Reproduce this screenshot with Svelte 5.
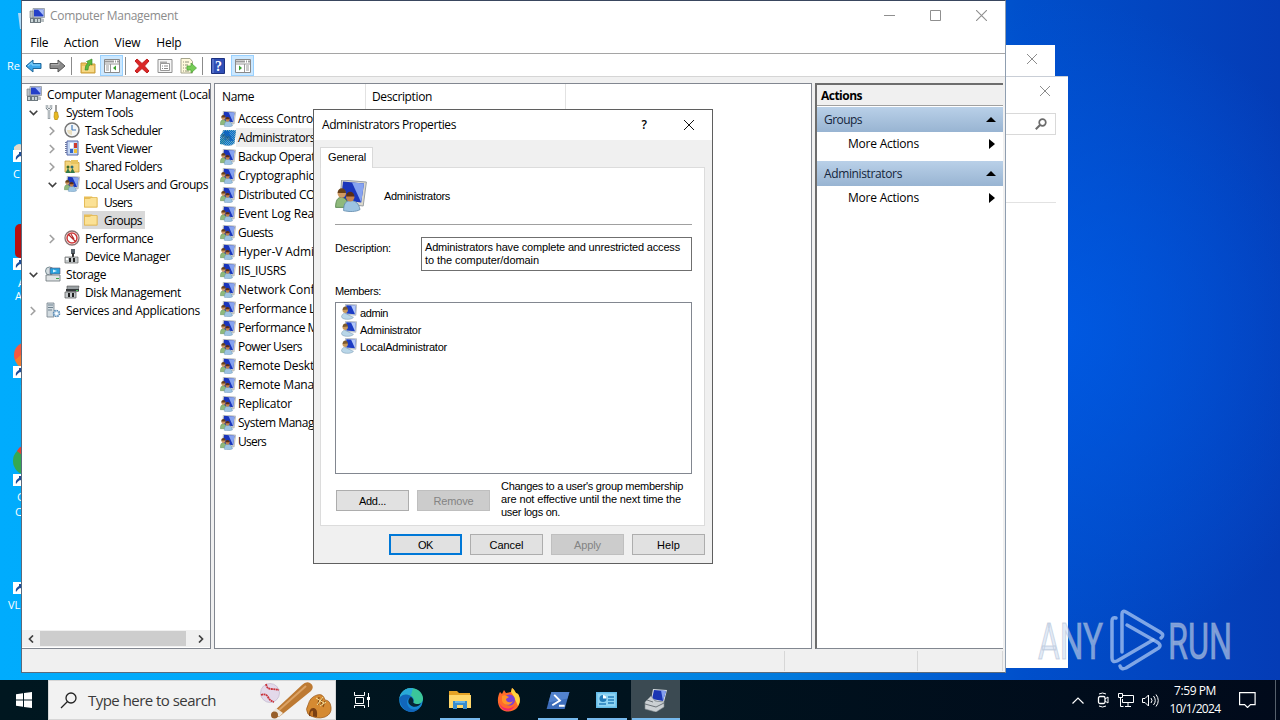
<script>
  const tree = [
    { l: 0, icon: 'computer', t: 'Computer Management (Local)', w: 167 },
    { l: 1, icon: 'tools', t: 'System Tools', w: 67, e: 'open' },
    { l: 2, icon: 'clock', t: 'Task Scheduler', w: 77, e: 'closed' },
    { l: 2, icon: 'event', t: 'Event Viewer', w: 67, e: 'closed' },
    { l: 2, icon: 'shared', t: 'Shared Folders', w: 77, e: 'closed' },
    { l: 2, icon: 'group', t: 'Local Users and Groups', w: 123, e: 'open' },
    { l: 3, icon: 'folder', t: 'Users', w: 28 },
    { l: 3, icon: 'folder', t: 'Groups', w: 38, sel: true },
    { l: 2, icon: 'perf', t: 'Performance', w: 68, e: 'closed' },
    { l: 2, icon: 'device', t: 'Device Manager', w: 85 },
    { l: 1, icon: 'storage', t: 'Storage', w: 40, e: 'open' },
    { l: 2, icon: 'disk', t: 'Disk Management', w: 96 },
    { l: 1, icon: 'services', t: 'Services and Applications', w: 134, e: 'closed' }
  ];
  // w is the width of the first n characters
  const groups = [
    { t: 'Access Control Assistance Operators', n: 13, w: 75 },
    { t: 'Administrators', n: 14, w: 77, sel: true },
    { t: 'Backup Operators', n: 13, w: 77 },
    { t: 'Cryptographic Operators', n: 13, w: 76 },
    { t: 'Distributed COM Users', n: 14, w: 77 },
    { t: 'Event Log Readers', n: 13, w: 76 },
    { t: 'Guests', n: 6, w: 35 },
    { t: 'Hyper-V Administrators', n: 12, w: 76 },
    { t: 'IIS_IUSRS', n: 9, w: 48 },
    { t: 'Network Configuration Operators', n: 12, w: 76 },
    { t: 'Performance Log Users', n: 13, w: 77 },
    { t: 'Performance Monitor Users', n: 11, w: 67 },
    { t: 'Power Users', n: 11, w: 64 },
    { t: 'Remote Desktop Users', n: 12, w: 76 },
    { t: 'Remote Management Users', n: 11, w: 76 },
    { t: 'Replicator', n: 10, w: 54 },
    { t: 'System Managed Accounts Group', n: 12, w: 76 },
    { t: 'Users', n: 5, w: 28 }
  ];
  const members = [
    { t: 'admin', w: 28 },
    { t: 'Administrator', w: 61 },
    { t: 'LocalAdministrator', w: 87 }
  ];
  const actions = [
    { t: 'Groups', w: 38 },
    { t: 'Administrators', w: 78 }
  ];

  function fit(el, arg) {
    const [w, n] = Array.isArray(arg) ? arg : [arg, el.textContent.length];
    const r = document.createRange();
    r.setStart(el.firstChild, 0);
    r.setEnd(el.firstChild, n);
    el.style.letterSpacing = ((w - r.getBoundingClientRect().width) / n).toFixed(3) + 'px';
  }
</script>

{#snippet closeX(c, s)}
  <svg width={s} height={s} viewBox="0 0 10 10"><path d="M0 0L10 10M10 0L0 10" stroke={c} stroke-width="1" fill="none" /></svg>
{/snippet}

{#snippet icon(k, s = 16)}
  <svg class="ic" width={s} height={s} viewBox="0 0 16 16">
    {#if k === 'computer'}
      <path d="M4 .5h11.500v9H4z" fill="#d8dce0" stroke="#8e979f" stroke-width=".8" /><path d="M5 1.500h9.500v7H5z" fill="#2440c8" /><path d="M9 1.500h5.500v6z" fill="#a9bdf6" />
      <path d="M1 3h3v7H1z" fill="#b8c0c6" stroke="#6f777d" stroke-width=".6" /><path d="M1 10h11v5H1z" fill="#6d7980" /><path d="M2 11h2v3H2zM6 11h2v3H6zM9 11h2v3H9z" fill="#c9d4d6" /><path d="M12 10l3 1v3h-3z" fill="#b9c0c3" />
    {:else if k === 'tools'}
      <path d="M2 1v3l2 2 2-2V1M4 6v9" stroke="#7c868c" stroke-width="2.400" fill="none" /><path d="M2 1v3l2 2 2-2V1M4 5v9.500" stroke="#eef2f4" stroke-width="1" fill="none" />
      <path d="M11 1v8" stroke="#777" stroke-width="1.400" /><path d="M9.500 8h3l1 5-1.500 3h-2L9 13z" fill="#e8b921" stroke="#a8820e" stroke-width=".6" />
    {:else if k === 'clock'}
      <circle cx="8" cy="8" r="7" fill="#f4f6f7" stroke="#757575" stroke-width="1.500" /><path d="M8 3v5h4" stroke="#447dbb" stroke-width="1.200" fill="none" /><path d="M8 8v5A5 5 0 0 1 3 8z" fill="#e9dfc2" />
    {:else if k === 'event'}
      <path d="M3 1h11v14H3z" fill="#c6d8f4" stroke="#5266a8" /><path d="M2 2v12" stroke="#6d78a2" stroke-width="2" stroke-dasharray="1 1" /><path d="M6 3h3v5H6z" fill="#fff" /><path d="M10 3h3v5h-3z" fill="#d0392b" /><path d="M6 9h3v4H6z" fill="#3467c8" /><path d="M10 9h3v4h-3z" fill="#efc136" />
    {:else if k === 'shared'}
      <path d="M1 3h5l1 1.500h8V14H1z" fill="#f3d47c" stroke="#c79a35" stroke-width=".8" /><path d="M7 2h7v4H7z" fill="#e8c45f" /><circle cx="4" cy="9" r="1.500" fill="#3f6b2a" /><circle cx="8" cy="9" r="1.500" fill="#2b6b78" /><path d="M1.500 15l2.500-5 2.500 5zM6 15l2.500-5 2.500 5z" fill="#347a4a" />
    {:else if k === 'group' || k === 'bigGroup'}
      <path d="M3.300 0l12.400 1-1.600 12L2.500 11.500z" fill="#dcd9cc" stroke="#9aa0a5" stroke-width=".5" /><path d="M4 .8l10.500.9-1.400 9.500L3 10z" fill="#1a35bb" /><path d="M8.500 1.200l6 .5-1.400 9.500z" fill="#86a3f0" />
      <path d="M.3 13.700c0-3.500 1-5 2.800-5s3.600 1.500 3.600 5z" fill="#8fb97c" stroke="#4e7d45" stroke-width=".4" /><circle cx="3.400" cy="6.800" r="2.100" fill="#d09a62" /><path d="M1.300 6.500c0-3.200 4.200-3.200 4.200 0z" fill="#674019" />
      <path d="M4.300 15.300c0-4 1.500-5 3.700-5s4 1.500 4.500 4.500c-2 1.200-5.500 1.200-8.200.5z" fill="#9dc4e2" stroke="#5c86aa" stroke-width=".4" /><circle cx="7.600" cy="8.600" r="2.100" fill="#c4834f" /><path d="M5.500 8.300c0-3.200 4.200-3.200 4.200 0z" fill="#5a2d15" />
    {:else if k === 'folder'}
      <path d="M1 2.500h8l1 1h4.500v10H1z" fill="#e9bd55" /><path d="M1.500 4.500h5l2-1H14v9.500H1.500z" fill="#fbe195" stroke="#dcae44" stroke-width=".6" />
    {:else if k === 'perf'}
      <circle cx="8" cy="8" r="7" fill="#fff" stroke="#8c7272" stroke-width="1.300" /><circle cx="8" cy="8" r="5" fill="none" stroke="#cf3939" stroke-width="1.500" /><path d="M4 4l8 8M7 4l3 5" stroke="#b62b2b" stroke-width="1.200" />
    {:else if k === 'device'}
      <path d="M7 1h4v5H7z" fill="#59636b" /><path d="M8 5h2v5H8z" fill="#333" /><path d="M1 9h13v6H1z" fill="#c4c9cb" stroke="#666" stroke-width=".7" /><path d="M5 10h2v4H5zM9 10h2v4H9z" fill="#222" /><path d="M2 10h2v2H2z" fill="#fff" />
    {:else if k === 'storage'}
      <circle cx="4.500" cy="5" r="4" fill="#d4dde0" stroke="#788b93" /><path d="M5 2h10v6H5z" fill="#29a0dc" stroke="#557" stroke-width=".6" /><path d="M8 3.500l4 1.500-4 1.500z" fill="#d8f3ff" /><path d="M1 9h14v6H1z" fill="#dfe3e4" stroke="#687277" stroke-width=".8" /><path d="M11 12h3v1h-3z" fill="#3ba34b" />
    {:else if k === 'disk'}
      <path d="M3 2h12l-1 5H3z" fill="#9aa0a3" stroke="#555" stroke-width=".6" /><path d="M2 5h13v2.500H2z" fill="#34383a" /><path d="M1 8h11v6H1z" fill="#c4c9cb" stroke="#555" stroke-width=".7" /><path d="M4 9h2v4H4zM8 9h2v4H8z" fill="#222" /><path d="M12 6h2v1h-2z" fill="#4c5" />
    {:else if k === 'services'}
      <path d="M2 1h7v14H2z" fill="#d2dbe0" stroke="#75818a" stroke-width=".8" /><path d="M3 3h5M3 5.500h5M3 8h4" stroke="#6f8290" /><circle cx="11.500" cy="11.500" r="3" fill="#cfe3f3" stroke="#5689b4" stroke-width="1.600" stroke-dasharray="1.500 .8" /><circle cx="11.500" cy="11.500" r="1.200" fill="#fff" />
    {:else if k === 'user'}
      <path d="M4.500.3l11.200.5-.8 10.500-10.400-.8z" fill="#cfd6dc" stroke="#939ba3" stroke-width=".5" /><path d="M5.300 1.200l9.400.5-.7 8.500-8.700-.6z" fill="#1c3cc4" /><path d="M10 1.500l4.700.2-.7 8.500z" fill="#b3c8f8" />
      <path d="M.5 12.500c1-3.500 3-3.500 5-2.500l7 3.300c-2 3-12 2.700-12-.8z" fill="#b9d6e8" stroke="#7193ad" stroke-width=".5" /><circle cx="4.200" cy="6.300" r="2.600" fill="#c99a5c" /><path d="M1.600 6c0-4.500 5.200-4.500 5.200-.5z" fill="#7d5a2c" />
    {/if}
  </svg>
{/snippet}

<div class="desk">
  <svg class="shortcuts" width="22" height="620" viewBox="0 0 22 620">
    <path d="M18 13h3v16h-1z" fill="#a9dafa" />
    <path d="M14 147q4-5 8-2v7h-8z" fill="#e2dacb" />
    <rect x="15" y="224" width="16" height="34" rx="5" fill="#b70f0f" />
    <circle cx="27" cy="355" r="13" fill="#f4593e" /><path d="M15 360q3 8 7 8v-14z" fill="#f69221" opacity=".6" />
    <circle cx="27" cy="461" r="14" fill="#35a852" /><path d="M17 451q2-4 5-5v9z" fill="#e64235" />
    {#each [151, 259, 367, 475, 583] as y}
      <g transform={`translate(13 ${y - 1})`}><path d="M0 0h11v12H0z" fill="#fff" /><path d="M3 10q-1-4 3-6V2h4v5L7 6q-2 1-4 4" fill="#1c4d99" /></g>
    {/each}
    <g fill="#fff" font-family="Open Sans" font-size="11"><text x="7" y="70">Re</text><text x="13" y="178">C</text><text x="18" y="287">A</text><text x="15" y="300">A</text><text x="20" y="393">F</text><text x="17" y="501">G</text><text x="15" y="516">C</text><text x="8" y="609">VL</text></g>
  </svg>

  <div class="back w1">{@render closeX('#8c8c8c', 10)}</div>
  <div class="back w2">
    <div class="bclose">{@render closeX('#8c8c8c', 10)}</div>
    <div class="find"><svg width="12" height="12" viewBox="0 0 12 12" fill="none" stroke="#6b6b6b"><circle cx="7.500" cy="4.500" r="3.300" stroke-width="1.700" /><path d="M5 7L.8 11.200" stroke-width="2" /></svg></div>
    <div class="sep"></div>
  </div>

  <main class="win">
    <header class="title">
      {@render icon('computer')}<span class="tt" use:fit={128}>Computer Management</span>
      <div class="ctl">
        <svg width="11" height="11" viewBox="0 0 11 11"><path d="M0 5.500h11" stroke="#8f8f8f" /></svg>
        <svg width="11" height="11" viewBox="0 0 11 11"><path d="M.5.5h10v10H.5z" stroke="#8f8f8f" fill="none" /></svg>
        {@render closeX('#8f8f8f', 11)}
      </div>
    </header>
    <nav class="menu"><span use:fit={18}>File</span><span use:fit={35}>Action</span><span use:fit={26}>View</span><span use:fit={25}>Help</span></nav>
    <div class="tools">
      <svg width="18" height="18" viewBox="0 0 18 18"><path d="M1 9l7-6v3.500h8v5H8V15z" fill="#3ba6ea" stroke="#1f6799" /><path d="M3 9l4-3.500V8h8" stroke="#90d8ff" fill="none" /></svg>
      <svg class="m5" width="18" height="18" viewBox="0 0 18 18"><path d="M17 9l-7-6v3.500H2v5h8V15z" fill="#8b8b8b" stroke="#575757" /><path d="M3 7.700h8V5" stroke="#b5b5b5" fill="none" /></svg>
      <i></i>
      <svg width="16" height="16" viewBox="0 0 16 16"><path d="M1 5h5l1 1h8v9H1z" fill="#ecc15b" stroke="#c99d3a" /><path d="M2 8h12v6H2z" fill="#f6d884" /><path d="M5 12q0-5 3-7L6.500 3.500 12 1v6L10.500 6Q8 8 8 12z" fill="#5cba3c" stroke="#2f8424" stroke-width=".6" /></svg>
      <span class="tog t1"><svg width="16" height="14" viewBox="0 0 16 14"><path d="M.5.5h15v13H.5z" fill="#fff" stroke="#8a8a8a" /><path d="M1 2.500h14" stroke="#9b9b9b" stroke-width="2" stroke-dasharray="9 1 1 1" /><path d="M1 5h14M6.500 5v8" stroke="#999" /><path d="M2 7h3M2 9h3M2 11h3" stroke="#999" /><path d="M12 6.500v5L9 9z" fill="#39a12d" /></svg></span>
      <i class="i2"></i>
      <svg class="m8" width="16" height="16" viewBox="0 0 16 16"><path d="M1 3l2-2 5 4.500L13 1l2 2-4.500 5 4.500 5-2 2-5-4.500L3 15l-2-2 4.500-5z" fill="#db2727" stroke="#c02020" stroke-width="1" /></svg>
      <svg class="m7" width="16" height="16" viewBox="0 0 16 16"><path d="M1 1.500h14v13H1z" fill="#f5f5f5" stroke="#909090" /><path d="M3 3.500h7v2H3z" fill="#aaa" /><path d="M3.500 5.500h9v7h-9z" fill="#fff" stroke="#999" /><path d="M5 8h6M5 10.500h6" stroke="#888" stroke-dasharray="1 1 6" /></svg>
      <svg class="m7" width="17" height="16" viewBox="0 0 17 16"><path d="M1 .5h9l2.500 3V15H1z" fill="#fff9dc" stroke="#a5a58d" /><path d="M3 4h6M3 7h5M3 10h4M3 13h6" stroke="#8e927b" stroke-dasharray="1 1 6" /><path d="M7 8h4V5l5.500 5-5.500 5v-3H7z" fill="#76cc55" stroke="#4ba335" stroke-width=".7" /></svg>
      <i></i>
      <svg width="14" height="16" viewBox="0 0 14 16"><path d="M.5.5h13v15H.5z" fill="#304fb6" stroke="#1c3180" /><path d="M2 1v14" stroke="#7f94da" /><text x="4" y="13" font-family="Liberation Serif" font-weight="700" font-size="14" fill="#fff">?</text></svg>
      <span class="tog t3"><svg width="16" height="14" viewBox="0 0 16 14"><path d="M.5.5h15v13H.5z" fill="#fff" stroke="#8a8a8a" /><path d="M1 2.500h14" stroke="#9b9b9b" stroke-width="2" stroke-dasharray="9 1 1 1" /><path d="M1 5h14M9.500 5v8" stroke="#999" /><path d="M11 7h3M11 9h3M11 11h3" stroke="#999" /><path d="M4 6.500v5L7 9z" fill="#39a12d" /></svg></span>
    </div>
    <div class="body">
      <section class="tree">
        <div class="rows">
          {#each tree as r}
            <div class="row l{r.l}">
              {#if r.l > 0}<span class="exp">
                {#if r.e === 'open'}<svg width="9" height="6" viewBox="0 0 9 6"><path d="M.7.7l3.800 3.800L8.300.7" fill="none" stroke="#404040" stroke-width="1.600" /></svg>
                {:else if r.e}<svg width="6" height="10" viewBox="0 0 6 10"><path d="M.8 1l4 4-4 4" fill="none" stroke="#a0a0a0" stroke-width="1.600" /></svg>{/if}
              </span>{/if}
              <span class="node" class:sel={r.sel}>{@render icon(r.icon)}<span class="lb" use:fit={r.w}>{r.t}</span></span>
            </div>
          {/each}
        </div>
        <div class="sb">
          <svg width="6" height="8" viewBox="0 0 6 8"><path d="M5 .5L1.500 4 5 7.500" fill="none" stroke="#404040" stroke-width="1.700" /></svg>
          <div class="thumb"></div>
          <svg width="6" height="8" viewBox="0 0 6 8"><path d="M1 .5L4.500 4 1 7.500" fill="none" stroke="#404040" stroke-width="1.700" /></svg>
        </div>
      </section>
      <section class="list">
        <div class="cols"><div><span use:fit={32}>Name</span></div><div><span use:fit={60}>Description</span></div></div>
        {#each groups as g}
          <div class="g" class:gsel={g.sel}><span class="gi">{@render icon('group')}</span><span use:fit={[g.w, g.n]}>{g.t}</span></div>
        {/each}
      </section>
      <aside>
        <div class="ah"><b use:fit={41}>Actions</b></div>
        {#each actions as a}
          <div class="ag"><span use:fit={a.w}>{a.t}</span><svg width="10" height="5" viewBox="0 0 10 5"><path d="M5 0l5 5H0z" /></svg></div>
          <div class="am"><span use:fit={71}>More Actions</span><svg width="6" height="10" viewBox="0 0 6 10"><path d="M0 0l6 5-6 5z" /></svg></div>
        {/each}
      </aside>
    </div>
    <footer><div></div><div></div><div></div></footer>
  </main>

  <div class="dlg">
    <div class="dt"><span use:fit={134}>Administrators Properties</span><span class="q">?</span>{@render closeX('#111', 10)}</div>
    <div class="tab"><span use:fit={38}>General</span></div>
    <div class="panel">
      <div class="who">{@render icon('bigGroup', 32)}<span use:fit={66}>Administrators</span></div>
      <div class="desc"><span class="dl"><span use:fit={56}>Description:</span></span><div class="box"><p><span use:fit={255}>Administrators have complete and unrestricted access</span></p><p><span use:fit={114}>to the computer/domain</span></p></div></div>
      <div class="ml"><span use:fit={46}>Members:</span></div>
      <div class="members">
        {#each members as m}<div>{@render icon('user')}<span use:fit={m.w}>{m.t}</span></div>{/each}
      </div>
      <div class="acts">
        <button><span use:fit={27}>Add...</span></button><button class="off"><span use:fit={40}>Remove</span></button>
        <div class="note"><p><span use:fit={182}>Changes to a user's group membership</span></p><p><span use:fit={180}>are not effective until the next time the</span></p><p><span use:fit={59}>user logs on.</span></p></div>
      </div>
    </div>
    <div class="btns"><button class="def"><span use:fit={15}>OK</span></button><button><span use:fit={34}>Cancel</span></button><button class="off"><span use:fit={27}>Apply</span></button><button><span use:fit={23}>Help</span></button></div>
  </div>

  <svg class="mark" width="200" height="70" viewBox="0 0 200 70">
    <g font-family="Roboto" font-size="50" fill="#cfdcf0" fill-opacity=".6" stroke="#a3b4cc" stroke-opacity=".5" stroke-width="1.200">
      <text x="3" y="51" textLength="65" lengthAdjust="spacingAndGlyphs">ANY</text><text x="133" y="51" textLength="64" lengthAdjust="spacingAndGlyphs">RUN</text>
    </g>
    <g fill="none" stroke="#a9c5f2" stroke-opacity=".75" stroke-width="3.500" stroke-linejoin="round" stroke-linecap="round"><path d="M81 10q-4-1-4 3v37q0 5 5 3l36-21" /><path d="M87 44V6q0-4 4-2l34 20q5 3 1 6" /><path d="M92 17l30 17q6 4 0 7L91 60q-5 2-6-2" /></g>
  </svg>

  <div class="bar">
    <div class="start"><svg width="16" height="16" viewBox="0 0 16 16" fill="#fff"><path d="M0 2.300L7 1.300v6.200H0zM8 1.100L16 0v7.500H8zM0 8.500h7v6.200l-7-1zM8 8.500h8V16l-8-1.100z" /></svg></div>
    <div class="search">
      <svg width="17" height="17" viewBox="0 0 17 17" fill="none" stroke="#222" stroke-width="1.300"><circle cx="11" cy="6" r="5" /><path d="M7.500 9.500L1 16" /></svg>
      <span use:fit={128}>Type here to search</span>
      <svg class="ball" width="74" height="37" viewBox="0 0 74 37">
        <circle cx="11" cy="11" r="9.500" fill="#e3d9ea" stroke="#b9b0ca" stroke-width=".6" /><path d="M7 2q1 5 5 5t8 1M2 13q5-2 7 2t6 5" fill="none" stroke="#c9333b" stroke-width="1.800" stroke-dasharray="2 .5" />
        <path d="M13 31L43 3q4-4 8-2 5 3 1 8L20 35q-5 0-7-4z" fill="#bd7a33" /><path d="M20 28L47 4" stroke="#dba365" stroke-width="2" /><path d="M17 26l7 5-4 4-6-6z" fill="#ede8df" /><circle cx="15.500" cy="33" r="3.500" fill="#98602b" />
        <path d="M49 32q-3-5 0-9 2-8 9-10 6-2 8 5 5 0 6 7 1 7-6 10-9 3-17-3z" fill="#d58a32" stroke="#9a5a1e" stroke-width=".7" /><path d="M50 34q0-9 5-8 4 1 3 9" fill="#7a3f12" /><path d="M51 33q1-5 3-4v6" fill="#c77826" /><path d="M60 15l-1 8m4-7l-1 8m4-5l-2 6" stroke="#8a4d14" stroke-width="1.200" fill="none" /><path d="M57 16l8 5m-1-6l-6 8m9-3l-6 4" stroke="#f5e3a0" />
      </svg>
    </div>
    <div class="app"><svg width="16" height="16" viewBox="0 0 16 16" fill="none" stroke="#fff"><path d="M.5 0v3.500h10V0M.5 16v-2.500h10V16M1.500 5.500h8v6h-8zM14.500 1v14" /><path d="M13 5h3v3h-3z" fill="#fff" stroke="none" /></svg></div>
    <div class="app"><svg width="24" height="24" viewBox="0 0 24 24"><circle cx="12" cy="12" r="11.800" fill="#1687d4" /><path d="M.5 10C2 2 9-.5 14 .2c7 1 11 7 9.800 12-1 4-7 5-9.500 2.800 1-2 1-5-2-7C8 5.500 3 6.500.5 10z" fill="#3bc69a" /><path d="M.5 10C2 2 9-.5 14 .2l-2 7C8 5.500 3 6.500.5 10z" fill="#29a9d8" /><path d="M1 9c4-4 10-3 12 1-4-1-6 3-4.500 7 2 5 8 5.500 12 3-5 6-13 5-17-1C1 15.500.5 12 1 9z" fill="#1166ba" /><path d="M12 9c2 1 3 3 2.200 5.500 2 2 6 2 8 .5-2 4-8 5-11 2-3-2-2-7 .8-8z" fill="#072536" /></svg></div>
    <div class="app run"><svg width="22" height="20" viewBox="0 0 22 20"><path d="M0 1h8l2 2h11v15H0z" fill="#e5a325" /><path d="M0 5h22v13H0z" fill="#ffd76a" /><path d="M4 19v-8h14v8h-4v-4H8v4z" fill="#388cce" /><path d="M6 11h10v2H6z" fill="#68b5e8" /></svg></div>
    <div class="app"><svg width="24" height="24" viewBox="0 0 24 24"><path d="M3 4l2 2 2-4 2 3 5-1 1-4c3 2 3 4 4 5l2 1c3 5 2 10-1 14-4 4-11 5-16 1C0 17 0 9 3 4z" fill="#ff6a2a" /><path d="M14 4l1-4c3 2 3 4 4 5l2 1c3 5 2 9 0 12l-5-11z" fill="#ffd23e" /><path d="M2 14c3 8 12 8 16 3-3 8-14 8-16-3z" fill="#f5296b" /><circle cx="12.500" cy="12" r="5.500" fill="#7a42d4" /><path d="M5 8c3-2 5 0 7 1l-3 2c0 4 5 4 7 2-2 5-9 5-11 0z" fill="#ff9427" /></svg></div>
    <div class="app run"><svg width="24" height="19" viewBox="0 0 24 20"><path d="M5 1h19l-5 18H0z" fill="#3c6cba" /><path d="M5 1h19l-2 7-20 4z" fill="#5b8cd6" opacity=".7" /><path d="M8 4l6 6-8 5M13 15.500h6" stroke="#fff" stroke-width="2" fill="none" /></svg></div>
    <div class="app run"><svg width="21" height="16" viewBox="0 0 21 16"><path d="M0 0h21v16H0z" fill="#64bce9" /><path d="M1.500 1.500h18v13h-18z" fill="#8fd4f3" /><circle cx="7" cy="6.500" r="3.500" fill="#237bb8" /><path d="M7 3v3.500h3.500A3.500 3.500 0 0 0 7 3z" fill="#fff" /><path d="M12 5h6M12 8h6M12 11h6M3 12h7" stroke="#247dbc" stroke-width="1.400" /></svg></div>
    <div class="app run act"><svg width="24" height="24" viewBox="0 0 24 24"><path d="M9 1l14 1-3 12-13-2z" fill="#d7dce1" /><path d="M10 2l12 1-3 10-11-2z" fill="#1b36b4" /><path d="M17 2.500l5 .5-3 10z" fill="#849eed" /><path d="M1 14l6-6 4 5 9 1v5l-8 5-11-3z" fill="#cbd0d3" stroke="#82898e" stroke-width=".6" /><path d="M1 16l11 3 8-4M3 12l6 2" stroke="#6d7479" fill="none" /></svg></div>
    <div class="tray">
      <svg width="12" height="7" viewBox="0 0 12 7"><path d="M.5 6.500L6 1l5.500 5.500" fill="none" stroke="#fff" stroke-width="1.200" /></svg>
      <svg class="c" width="12" height="16" viewBox="0 0 12 16" fill="none" stroke="#fff"><rect x="1.500" y="4.500" width="6.500" height="7" rx="1.500" stroke-width="1.300" /><path d="M8 7l3-2v6l-3-2M2 2q3.500-2 7 0M2 14q3.500 2 7 0" /></svg>
      <svg class="n" width="16" height="14" viewBox="0 0 16 14" fill="none" stroke="#fff"><path d="M5 2.500h10.500v7H4.500V6M7 13.500h6M10 9.500v4M.5.500h4v4h-4zM2.500 4.500v9h3" /></svg>
      <svg class="v" width="17" height="15" viewBox="0 0 17 15" fill="none" stroke="#fff"><path d="M.5 5.500h2.500l3.500-3.500v11L3 9.500H.5zM9 5q2 2.500 0 5M11.500 3q3.500 4.500 0 9M14 1.500q4.500 6 0 12" /></svg>
      <div class="time"><span use:fit={42}>7:59 PM</span><span use:fit={51}>10/1/2024</span></div>
      <svg class="a" width="17" height="16" viewBox="0 0 17 16" fill="none" stroke="#fff" stroke-width="1.200"><path d="M.6.6h15.500v12h-4.600L8.500 15.500l-2.900-2.900H.6z" /></svg>
      <div class="edge"></div>
    </div>
  </div>
</div>

<style>
  .desk { position: relative; width: 1280px; height: 720px; overflow: hidden; font: 12px/16px "Open Sans", "Noto Sans", sans-serif; color: #000; white-space: nowrap;
    background: radial-gradient(ellipse 300px 330px at 1060px 330px, rgba(0, 92, 232, .8), rgba(0, 75, 210, 0)), linear-gradient(90deg, #00acfd 0, #00a6f7 30%, #0078dc 62%, #004fcb 80%, #043cb6 100%); }
  .desk * { box-sizing: border-box; }
  svg { display: block; flex: none; }
  p { margin: 0; }
  .shortcuts { position: absolute; left: 0; top: 0; }
  .back { position: absolute; background: #fff; }
  .w1 { left: 900px; top: 45px; width: 155px; height: 32px; display: flex; justify-content: flex-end; padding: 9px 18px; }
  .w2 { left: 900px; top: 76px; width: 168px; height: 592px; padding: 9px 12px 9px 13px; border-top: 1px solid #c9ced6; display: flex; flex-direction: column; align-items: flex-end; }
  .bclose { padding: 0 6px; height: 27px; }
  .find { width: 60px; height: 22px; border: 1px solid #d9d9d9; padding: 4px 8px; display: flex; justify-content: flex-end; }
  .sep { height: 68px; width: 60px; border-bottom: 1px solid #e2e2e2; }
  .win { position: absolute; left: 21px; top: 0; width: 985px; height: 673px; background: #f0f0f0; border: 1px solid #5a6a7c; border-top-color: #39465e; border-right-color: #8f9eb0; display: flex; flex-direction: column; }
  .title { height: 30px; background: #fff; display: flex; align-items: center; padding-left: 7px; }
  .tt { margin-left: 5px; color: #8c8c8c; }
  .ctl { margin-left: auto; display: flex; gap: 35px; padding-right: 18px; margin-top: -1px; }
  .menu { height: 23px; background: #fff; border-bottom: 1px solid #a5a5a5; display: flex; align-items: center; padding: 1px 0 0 9px; gap: 16px; }
  .menu span { margin-right: -.3px; position: relative; left: -.8px; }
  .tools { height: 23px; background: #fff; border-bottom: 1px solid #d5d5d5; display: flex; align-items: center; padding: 1px 0 0 3px; margin-bottom: 6px; }
  .tools i { width: 1px; height: 18px; background: #8b8b8b; margin: 0 8px 0 5px; }
  .tools i.i2 { margin: 0 0 0 2px; }
  .m5 { margin-left: 5px; }
  .m7 { margin-left: 7px; }
  .m8 { margin-left: 8px; }
  .tog { width: 23px; height: 21px; background: #cce8ff; border: 1px solid #99d1ff; display: flex; align-items: center; justify-content: center; }
  .tog.t1 { margin-left: 4px; }
  .tog.t3 { margin-left: 6px; }
  .body { display: flex; height: 566px; }
  .tree { width: 189px; border: 1px solid #828790; border-left: 0; background: #fff; display: flex; flex-direction: column; justify-content: space-between; overflow: hidden; padding-bottom: 1px; }
  .rows { padding-top: 1px; }
  .row { display: flex; height: 18px; align-items: center; }
  .l0 { padding-left: 4px; }
  .l1 { padding-left: 3px; } .l2 { padding-left: 22px; } .l3 { padding-left: 41px; }
  .exp { width: 16px; display: flex; justify-content: center; flex: none; margin-right: 3px; padding-top: 1px; }
  .node { display: flex; height: 18px; align-items: center; padding: 0 3px 0 1px; }
  .node.sel { background: #d9d9d9; }
  .l0 .node { padding-left: 0; }
  .lb { margin-left: 5px; padding-top: 1px; }
  .sb { height: 17px; background: #f0f0f0; display: flex; align-items: center; padding: 0 6px; gap: 6px; }
  .thumb { width: 146px; height: 15px; background: #cdcdcd; margin-right: 6px; }
  .list { width: 598px; margin-left: 3px; border: 1px solid #828790; background: #fff; }
  .cols { display: flex; height: 25px; align-items: stretch; }
  .cols div { width: 151px; border-right: 1px solid #e2e2e2; padding: 5px 0 0 7px; }
  .cols div + div { width: 200px; padding-left: 6px; }
  .g { display: flex; height: 19px; align-items: center; padding-left: 5px; }
  .g > span + span { margin-left: 2px; padding-top: 1px; }
  .gsel { background: linear-gradient(#eee, #eee) 21px 0 / 130px 19px no-repeat; }
  .gsel .gi { position: relative; }
  .gsel .gi::after { content: ""; position: absolute; inset: 0; clip-path: polygon(25% 0, 100% 5%, 90% 90%, 50% 100%, 0 90%, 0 40%); background: repeating-conic-gradient(#0a76bd 0 25%, rgba(20, 125, 200, .45) 0 50%) 0 0 / 2px 2px; }
  aside { width: 188px; margin-left: 3px; border-left: 2px solid #6d6d6d; border-top: 2px solid #6d6d6d; border-bottom: 1px solid #828790; background: #fff; }
  .ah { height: 21px; background: #f0f0f0; border-bottom: 1px solid #a0a0a0; padding: 3px 0 0 4px; margin-bottom: 1px; }
  .ag { height: 25px; background: linear-gradient(#b9d0e8, #98b4d2); display: flex; align-items: center; justify-content: space-between; padding: 0 7px; color: #14253c; }
  .am { height: 24px; margin-bottom: 5px; display: flex; align-items: center; justify-content: space-between; padding: 0 8px 0 31px; }
  footer { flex: 1; display: flex; padding: 2px 2px 1px 0; }
  footer div { border-right: 1px solid #d7d7d7; width: 85px; }
  footer div:nth-child(1) { width: 763px; } footer div:nth-child(2) { width: 133px; }

  .dlg { position: absolute; left: 313px; top: 109px; width: 400px; height: 455px; border: 1px solid #5f5f5f; background: #f0f0f0; font: 11px/13px "Liberation Sans", Arial, sans-serif; padding: 0 7px; }
  .dt { height: 30px; margin: 0 -7px; background: #fff; display: flex; align-items: center; padding: 0 18px 0 8px; font: 12px/16px "Open Sans", sans-serif; }
  .q { margin: 0 37px 0 auto; font-weight: 600; }
  .tab { width: 53px; height: 21px; margin: 7px 0 -1px -1px; padding: 3px 0 0 7px; background: #fff; border: 1px solid #d9d9d9; border-bottom: 0; position: relative; }
  .panel { width: 385px; height: 359px; margin-left: -1px; background: #fff; border: 1px solid #dcdcdc; padding: 12px 12px 0 14px; }
  .who { display: flex; gap: 17px; height: 45px; border-bottom: 1px solid #a0a0a0; }
  .who span { margin-top: 10px; }
  .desc { display: flex; margin-top: 12px; justify-content: space-between; }
  .dl { margin-top: 5px; }
  .box { width: 271px; height: 34px; border: 1px solid #6f6f6f; padding: 3px 0 0 3px; }
  .ml { margin: 14px 0 5px; height: 12px; }
  .members { height: 172px; width: 357px; border: 1px solid #828790; padding: 1px 0 0 5px; }
  .members div { display: flex; height: 17px; align-items: center; gap: 3px; }
  .members span { padding-top: 2px; }
  .members svg { margin-top: -1px; }
  .acts { display: flex; margin: 6px 0 0 1px; }
  .acts button { margin: 10px 8px 0 0; }
  .note { margin-left: 3px; }
  button { width: 73px; height: 21px; border: 1px solid #adadad; background: #e1e1e1; padding: 2px 0 0; font: 11px/13px "Liberation Sans", Arial, sans-serif; color: #000; }
  .off { background: #ccc; border-color: #bfbfbf; color: #838383; }
  .def { border: 2px solid #0078d7; }
  .btns { display: flex; gap: 8px; justify-content: flex-end; margin-top: 8px; }

  .mark { position: absolute; left: 1035px; top: 608px; }
  .bar { position: absolute; left: 0; top: 680px; width: 1280px; height: 40px; background: linear-gradient(90deg, #001720, #00131e 50%, #010a1b); display: flex; }
  .start { width: 48px; display: flex; align-items: center; justify-content: center; }
  .search { width: 288px; background: #f2f2f2; border: 1px solid #d6d6d6; display: flex; align-items: center; padding-left: 11px; color: #3a3a3a; font-size: 15px; }
  .search span { margin-left: 11px; }
  .ball { margin-left: auto; margin-right: 2px; }
  .app { width: 49px; display: flex; align-items: center; justify-content: center; }
  .run { background: linear-gradient(#76b9ed, #76b9ed) 50% 100% / 40px 2px no-repeat; }
  .act { background: linear-gradient(#76b9ed, #76b9ed) 50% 100% / 48px 2px no-repeat, #3b4a52; }
  .app { position: relative; left: 1px; }
  .tray { margin-left: auto; display: flex; align-items: center; color: #fff; }
  .c { margin-left: 13px; } .n { margin-left: 9px; } .v { margin-left: 8px; }
  .time { width: 54px; margin-left: 9px; display: flex; flex-direction: column; align-items: center; line-height: 18px; }
  .a { margin-left: 17px; }
  .edge { width: 20px; height: 40px; border-right: 1px solid #56606c; margin-right: 4px; }
</style>
